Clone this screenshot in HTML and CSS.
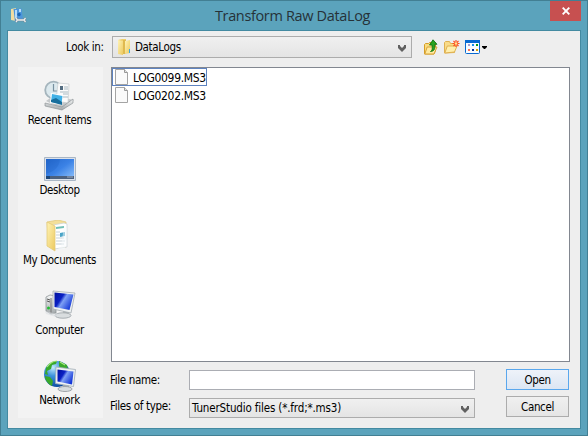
FILE: index.html
```
<!DOCTYPE html>
<html lang="en">
<head>
<meta charset="utf-8">
<title>Transform Raw DataLog</title>
<link rel="stylesheet" href="styles.css">
</head>
<body>
<svg class="defs" width="0" height="0">
  <defs>
    <linearGradient id="gold" x1="0" y1="0" x2="1" y2="1"><stop offset="0" stop-color="#fff3b5"/><stop offset="1" stop-color="#ecc95f"/></linearGradient>
    <linearGradient id="blue" x1="0" y1="0" x2="1" y2="1"><stop offset="0" stop-color="#2468cc"/><stop offset=".5" stop-color="#3b82e6"/><stop offset="1" stop-color="#8fc2fc"/></linearGradient>
    <linearGradient id="screen" x1="0" y1="0" x2="1" y2=".6"><stop offset="0" stop-color="#000f9c"/><stop offset=".4" stop-color="#0920c4"/><stop offset=".55" stop-color="#7ea0f4"/><stop offset="1" stop-color="#1538d8"/></linearGradient>
    <linearGradient id="metal" x1="0" y1="0" x2="0" y2="1"><stop offset="0" stop-color="#f6f8f8"/><stop offset="1" stop-color="#a1a6a8"/></linearGradient>
    <radialGradient id="globe" cx=".35" cy=".25" r=".8"><stop offset="0" stop-color="#c4ecff"/><stop offset=".4" stop-color="#3d93dc"/><stop offset="1" stop-color="#08469c"/></radialGradient>
    <symbol id="page" viewBox="0 0 14 16"><path d="M.5.5h9l3 3v12H.5z" fill="#fafafa" stroke="#a4a4a4"/><path d="M9.500.5v3h3" fill="#e4e4e4" stroke="#999"/></symbol>
    <symbol id="chevron" viewBox="0 0 8 7"><path d="M0 0h2v1l2 2 2-2V0h2v3L4 7 0 3z" fill="#606060"/></symbol>
  </defs>
</svg>
<div class="window">
  <header class="titlebar">
    <svg class="app-icon" viewBox="0 0 16 16"><path d="M0 1l5-1v13l-5-1z" fill="#f2dda0"/><path d="M2.500 1l8-.5 1.500 11.500-8 2z" fill="#4d96dc"/><path d="M4 2h2v9H4zM8 1h2v3H8z" fill="#b5dcfa"/><circle cx="8" cy="6.500" r="1.700" fill="#1b65b2"/><path d="M5 10l1.500 2L5 14M7 12h6M14.500 10L13 12l1.500 2" stroke="#75858e" stroke-width="2.600" fill="none"/><path d="M5 10l1.500 2L5 14M7 12h6M14.500 10L13 12l1.500 2" stroke="#e9eef0" stroke-width="1.300" fill="none"/></svg>
    <h1 class="title"><span>Transform Raw DataLog</span></h1>
    <button class="close" aria-label="Close"><svg width="8" height="8" viewBox="0 0 8 8"><path d="M.7.7l6.600 6.600M7.300.7L.7 7.300" stroke="#fff" stroke-width="1.900"/></svg></button>
  </header>
  <main class="client">
    <div class="toolbar">
      <label class="look-label"><span>Look in:</span></label>
      <div class="combo look-combo">
        <svg width="14" height="16" viewBox="0 0 14 16"><path d="M1 1l4-1h4v15H1z" fill="#efcf6c"/><path d="M1 1l5 1v14l-5-1z" fill="url(#gold)"/><path d="M6 1h3v14H6z" fill="#dfb94f"/><path d="M8 2l5-1v13l-5 1z" fill="url(#gold)"/><path d="M12 10h1v4h-1z" fill="#34a9e6"/></svg>
        <span>DataLogs</span>
        <svg class="chev" width="8" height="7"><use href="#chevron"/></svg>
      </div>
      <div class="tools">
        <svg width="14" height="16" viewBox="0 0 14 16"><path d="M.5 15V5.500l1-1h3l1-1h6v8L10 15z" fill="#f9db7f" stroke="#d69d26"/><path d="M.8 15l2.400-7H13l-3 7z" fill="#ffeaa0" stroke="#d8a338"/><path d="M6.500 12.500c2-1 2-3 1.500-6.500H5.500L9 .8l4 4.500h-2.300c.6 5-.6 7-4.200 7.200z" fill="#28a321" stroke="#086e0b" stroke-width=".8"/></svg>
        <svg width="16" height="14" viewBox="0 0 16 14"><path d="M.5 13V2.500l1-1h4l1 2h4v9z" fill="#f9db88" stroke="#dfb050"/><path d="M.8 13l2.500-7H13l-2.500 6z" fill="#ffefad" stroke="#dfb050"/><path d="M12 0v7M8.500 3.500h7M9.500 1l5 5M14.500 1l-5 5" stroke="#ff4b1c" stroke-width="1.100"/><circle cx="12" cy="3.500" r="1.300" fill="#ffe38b"/></svg>
        <svg class="view-icon" width="22" height="14" viewBox="0 0 22 14"><rect x=".5" y=".5" width="14" height="13" rx="1" fill="#f8fcff" stroke="#0869d1"/><path d="M0 0h15v3H0z" fill="#0869d1"/><path d="M3 4h2v2H3z" fill="#a79bd0"/><path d="M7 4h2v2H7z" fill="#168bee"/><path d="M11 4h2v2h-2z" fill="#079a16"/><path d="M3 9h2v2H3z" fill="#ff704d"/><path d="M7 9h2v2H7z" fill="#002d9b"/><path d="M11 9h2v2h-2z" fill="#dca000"/><path d="M17 6h5v1l-2 2h-1l-2-2z" fill="#000"/></svg>
      </div>
    </div>
    <div class="body">
      <nav class="places">
        <a class="place"><svg viewBox="0 0 32 32"><path d="M2 21l7-5 21 4-12 9z" fill="#c4c8ca"/><circle cx="9.500" cy="10" r="8.300" fill="#dce9ee" stroke="#a5b5bd" stroke-width="1.800"/><path d="M9.500 4v7H14" stroke="#7790a0" stroke-width="1.200" fill="none"/><path d="M14 3l11 1-1 19-12-2z" fill="#fafafa" stroke="#c5cbce" stroke-width=".7"/><path d="M16 6h3v4h-3z" fill="#536c80"/><path d="M20 7h4M20 9h4M16 12h8M19 14h5M19 17h5" stroke="#aabac2"/><path d="M7 13l12 2-1 10-12-2z" fill="#fff"/><path d="M8 14l10.500 2-1 8L7 22z" fill="#42b1e6"/><path d="M7 20l5-2 6 4v3L7 22z" fill="#176e9c"/><path d="M1 23l17 4 11-8v4l-11 7-17-4z" fill="url(#metal)" stroke="#858b8f" stroke-width=".6"/></svg><span>Recent Items</span></a>
        <a class="place"><svg viewBox="0 0 32 32"><path d="M.5 7.500h31v23H.5z" fill="#dbe1ea" stroke="#a9b6c5"/><path d="M2 9h28v20H2z" fill="url(#blue)"/><path d="M2 9h14c-1 8-5 12-14 15z" fill="#1554b8" opacity=".2"/><path d="M2 26h28v3H2z" fill="#4c617f"/><path d="M2 26h4v3H2z" fill="#1d4778"/><path d="M23 27h6" stroke="#9dabc0"/></svg><span>Desktop</span></a>
        <a class="place"><svg viewBox="0 0 32 32"><path d="M3 2l11-2 8 2v25L5 27z" fill="#f3df99" stroke="#dfc577" stroke-width=".7"/><path d="M9 5l11-2 3 1v23l-13 2z" fill="#fff" stroke="#c9d1d5" stroke-width=".7"/><path d="M12 7l8-1v2l-8 1z" fill="#70bfb5"/><path d="M12 12h4M12 15h4M12 18h8M12 21h9M12 24h8" stroke="#b7c5cd" stroke-width=".8"/><path d="M16 13l5-1v4l-5 1z" fill="#4aa4c7"/><path d="M20 6l3 2-2 21-9 1 5-3z" fill="#f6fafc" opacity=".5"/><path d="M3 2l8 4v25l-8-5z" fill="url(#gold)" stroke="#e3ca7a" stroke-width=".8"/></svg><span>My Documents</span></a>
        <a class="place"><svg viewBox="0 0 32 32"><path d="M2 7l4-2 6 1v17l-5 1-5-3z" fill="url(#metal)" stroke="#8c9294" stroke-width=".8"/><path d="M7 8v15" stroke="#777"/><path d="M3 9l3 1M3 11l3 1" stroke="#555"/><circle cx="4.500" cy="18" r="1.500" fill="#22bd32"/><path d="M19 21l6 1v4h-6z" fill="#abb0b2"/><ellipse cx="19" cy="25.500" rx="8" ry="2.700" fill="#d9dddf" stroke="#a9afb3"/><path d="M9 1l22 2-4 20-18-4z" fill="#edf0f1" stroke="#a6adb3" stroke-width=".8"/><path d="M10.500 2.500l19 2-4 15.500-15-3z" fill="url(#screen)"/><path d="M1 21l12 3-1 3-10-3z" fill="#dce0e2" opacity=".6"/></svg><span>Computer</span></a>
        <a class="place"><svg viewBox="0 0 32 32"><circle cx="13" cy="14" r="13" fill="url(#globe)"/><path d="M2 8c3-5 6-7 11-7l-1 3-4 1-1 4-4 2 1 4-3-1zM15 1l8 4 1 5-4-2-2 2-3-4zM1 16l5 1 3 4-1 5c-4-2-7-6-7-10z" fill="#39a92b"/><path d="M3 7c3-4 6-6 10-6M16 2l5 3" stroke="#abe77c" stroke-width="1.200" fill="none"/><path d="M19 24l6 1v4h-6z" fill="#9da5ab"/><ellipse cx="21" cy="29" rx="7" ry="2.500" fill="#d8dddf" stroke="#9fa5aa"/><path d="M12 7l19.500 2.500-2 17-18-3z" fill="#eef2f4" stroke="#a1adb5" stroke-width=".8"/><path d="M13.500 9.500l16 2-1.500 13-14.500-3z" fill="url(#screen)"/></svg><span>Network</span></a>
      </nav>
      <section class="content">
        <div class="files">
          <div class="file selected"><svg width="14" height="16"><use href="#page"/></svg><span>LOG0099.MS3</span></div>
          <div class="file"><svg width="14" height="16"><use href="#page"/></svg><span>LOG0202.MS3</span></div>
        </div>
        <div class="form">
          <div class="fields">
            <label>File name:</label><input class="name-input" type="text" aria-label="File name">
            <label class="type-label">Files of type:</label><div class="combo type-combo"><span class="filter">TunerStudio files (*.frd;*.ms3)</span><svg class="chev" width="8" height="7"><use href="#chevron"/></svg></div>
          </div>
          <div class="buttons"><button class="btn primary">Open</button><button class="btn">Cancel</button></div>
        </div>
      </section>
    </div>
  </main>
</div>
</body>
</html>
```
FILE: styles.css
```
* { box-sizing: border-box; }
body { margin: 0; font: 11.5px/14px "DejaVu Sans Condensed", "DejaVu Sans", sans-serif; font-stretch: condensed; letter-spacing: -.35px; color: #000; overflow: hidden; }
svg { display: block; flex: none; }
span { white-space: nowrap; }
.defs { position: absolute; }
.window { width: 588px; height: 436px; background: #5ba3bc; border: 1px solid #427f93; padding: 0 6px 6px; }
.titlebar { height: 29px; display: flex; align-items: flex-start; }
.app-icon { width: 16px; height: 16px; margin: 7px 0 0 4px; }
.title { flex: 1; margin: 4px 0 0 8px; text-align: center; font: 14.5px/22px "Open Sans", "Noto Sans", sans-serif; font-stretch: normal; letter-spacing: -.35px; color: #263238; }
.close { width: 31px; height: 20px; border: 0; padding: 0; background: #c75050; display: grid; place-items: center; }
.client { height: 399px; border: 1px solid #438aa1; background: #eee; padding: 5px 10px 9px; }
.toolbar { display: flex; height: 22px; align-items: center; }
.look-label { width: 94px; padding-left: 48px; }
.combo { border: 1px solid #acacac; background: linear-gradient(#f0f0f0, #e4e4e4); display: flex; align-items: center; }
.look-combo { width: 300px; height: 22px; padding: 0 5px 0 4px; gap: 4px; }
.chev { margin-left: auto; margin-top: 3px; }
.tools { display: flex; align-items: center; gap: 6px; margin-left: 12px; }
.view-icon { margin-left: -1px; }
.body { display: flex; gap: 8px; margin-top: 9px; height: 351px; }
.places { width: 85px; background: #f3f3f3; padding-top: 13px; }
.place { display: flex; flex-direction: column; align-items: center; height: 70px; padding-right: 2px; }
.place svg { width: 32px; height: 32px; margin-bottom: 1px; }
.content { width: 459px; display: flex; flex-direction: column; }
.files { height: 295px; background: #fff; border: 1px solid #828790; }
.file { display: flex; align-items: center; height: 18px; width: 95px; padding-left: 2px; gap: 4px; border: 1px solid transparent; font-size: 12px; letter-spacing: -.32px; }
.file span { padding-top: 2px; }
.file.selected { border-color: #5e83c0; }
.form { display: flex; justify-content: space-between; padding: 7px 1px 0 0; }
.fields { display: grid; grid-template-columns: 79px 286px; grid-template-rows: 20px 20px; row-gap: 8px; padding-top: 1px; align-items: center; margin-left: -1px; }
.name-input { width: 286px; height: 20px; border: 1px solid #abadb3; background: #fff; padding: 0 3px; font: inherit; }
.type-label { margin-top: -4px; }
.type-combo { height: 20px; padding: 0 5px 0 2px; }
.filter { letter-spacing: -.15px; }
.buttons { display: flex; flex-direction: column; gap: 6px; }
.btn { width: 63px; height: 21px; padding: 0; border: 1px solid #acacac; background: linear-gradient(#f0f0f0, #e5e5e5); font: inherit; letter-spacing: inherit; color: #000; }
.btn.primary { border-color: #5aa7ed; background: linear-gradient(#eef2f9, #dce6f3); }
```
